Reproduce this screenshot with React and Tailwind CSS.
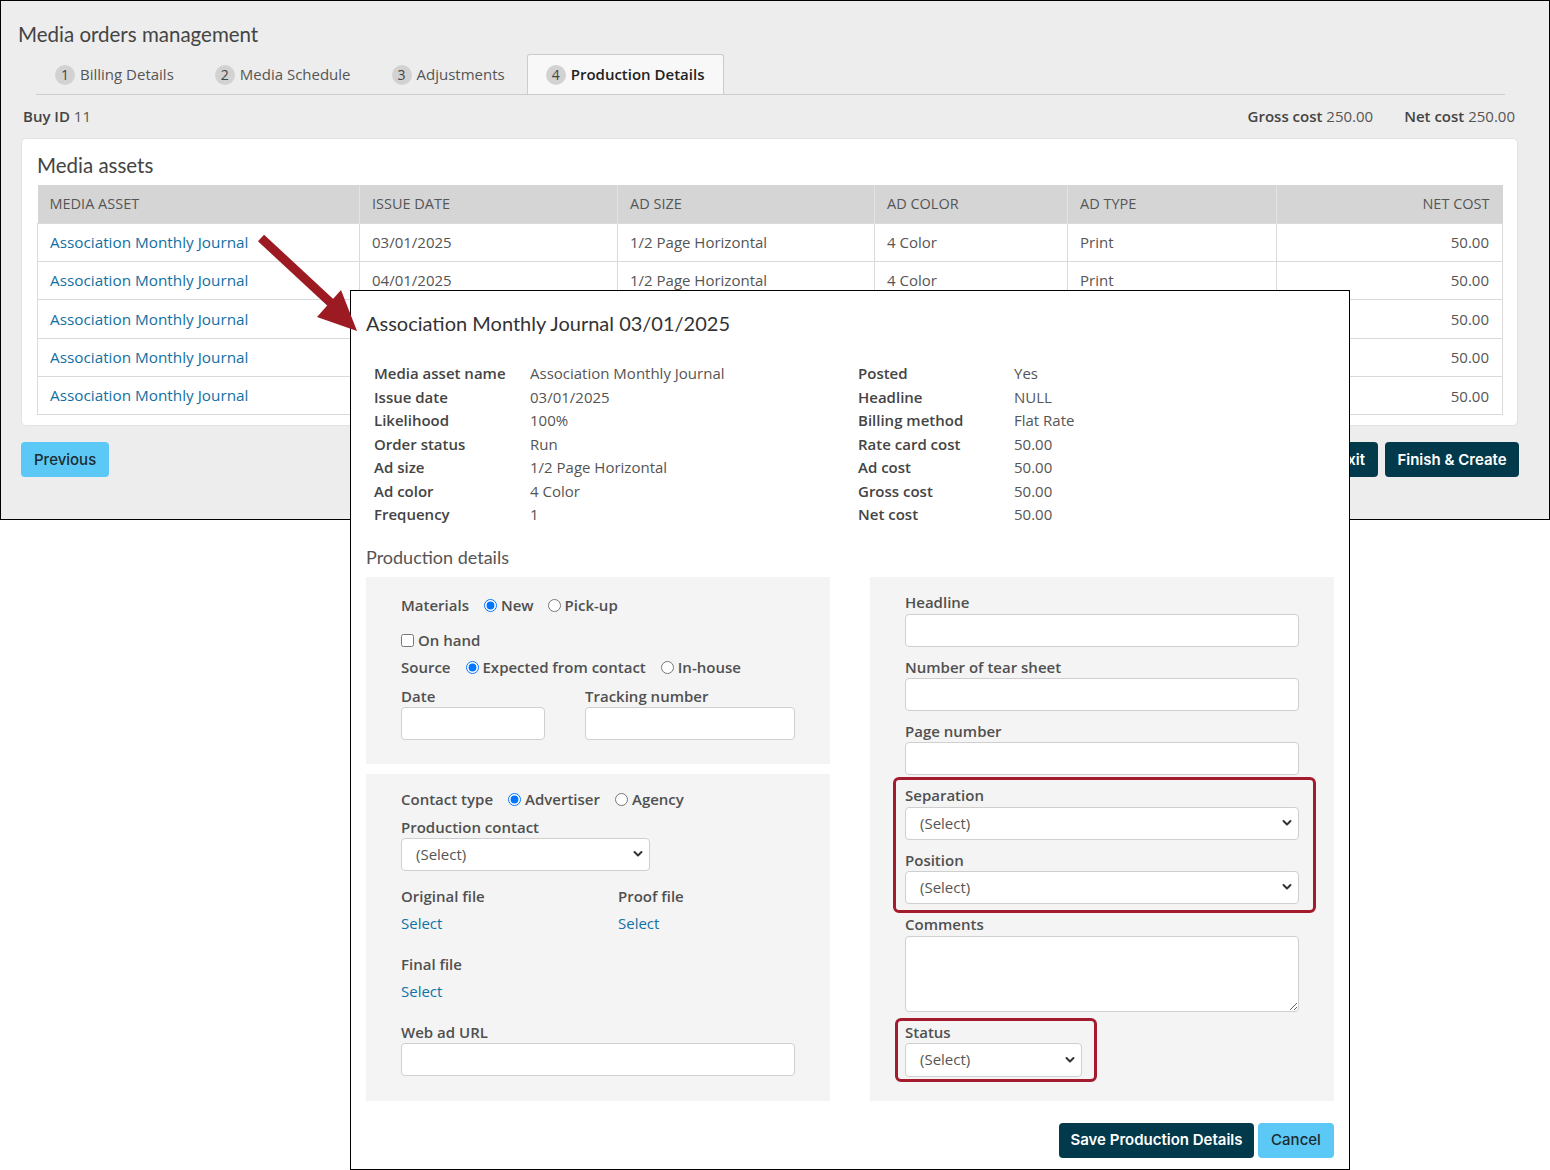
import React from 'react';

const Chevron = () => (
  <svg className="absolute right-[6px] top-1/2 -translate-y-1/2" width="10" height="7" viewBox="0 0 10 7">
    <path d="M1.5 1.5 L5 5 L8.5 1.5" fill="none" stroke="#333" strokeWidth="2" strokeLinecap="round" strokeLinejoin="round" />
  </svg>
);

const FakeSelect = ({ w, h = 33 }) => (
  <div
    className="relative bg-white border border-[#cfcfcf] rounded-[4px] flex items-center pl-[14px] text-[15px] text-[#555]"
    style={{ width: w, height: h }}
  >
    (Select)
    <Chevron />
  </div>
);

const Input = ({ w }) => (
  <div className="h-[33px] bg-white border border-[#cfcfcf] rounded-[4px]" style={{ width: w }} />
);

const Label = ({ children, className = '' }) => (
  <div className={`h-[22px] leading-[22px] text-[15px] font-semibold text-[#505050] ${className}`}>{children}</div>
);

const Radio = ({ checked, label }) => (
  <label className="flex items-center">
    <input type="radio" defaultChecked={checked} className="m-0 w-[13px] h-[13px]" />
    <span className="ml-[4px] text-[15px] font-semibold text-[#505050]">{label}</span>
  </label>
);

const Tab = ({ n, label, active }) => (
  <div
    className={
      active
        ? 'flex items-center px-[18px] h-[40px] bg-[#f8f8f8] border border-[#cccccc] border-b-0 rounded-t-[3px]'
        : 'flex items-center px-[19px] h-[39px]'
    }
  >
    <span className="w-[20px] h-[20px] rounded-full bg-[#d2d2d2] text-[14px] text-[#444] flex items-center justify-center">
      {n}
    </span>
    <span className={active ? 'ml-[5px] text-[15px] font-semibold text-[#222]' : 'ml-[5px] text-[15px] text-[#555]'}>
      {label}
    </span>
  </div>
);

export default function App() {
  const dates = ['03/01/2025', '04/01/2025', '05/01/2025', '06/01/2025', '07/01/2025'];
  const cols = ['MEDIA ASSET', 'ISSUE DATE', 'AD SIZE', 'AD COLOR', 'AD TYPE'];
  const widths = [322, 258, 257, 193, 209, 226];
  const leftDetails = [
    ['Media asset name', 'Association Monthly Journal'],
    ['Issue date', '03/01/2025'],
    ['Likelihood', '100%'],
    ['Order status', 'Run'],
    ['Ad size', '1/2 Page Horizontal'],
    ['Ad color', '4 Color'],
    ['Frequency', '1'],
  ];
  const rightDetails = [
    ['Posted', 'Yes'],
    ['Headline', 'NULL'],
    ['Billing method', 'Flat Rate'],
    ['Rate card cost', '50.00'],
    ['Ad cost', '50.00'],
    ['Gross cost', '50.00'],
    ['Net cost', '50.00'],
  ];

  return (
    <div className="relative w-[1550px] h-[1170px] bg-white overflow-hidden font-['Open_Sans',sans-serif]">
      {/* Background page */}
      <div className="h-[520px] border border-black bg-[#ededed]">
        <div className="pl-[17px] pt-[19px] text-[20.5px] leading-[28px] text-[#444] font-['Lato',sans-serif]">
          Media orders management
        </div>
        <div className="ml-[35px] mr-[44px] mt-[7px] h-[40px] flex items-end gap-[3px] border-b border-[#cccccc]">
          <Tab n="1" label="Billing Details" />
          <Tab n="2" label="Media Schedule" />
          <Tab n="3" label="Adjustments" />
          <Tab n="4" label="Production Details" active />
        </div>
        <div className="flex justify-between pl-[22px] pr-[34px] mt-[10px] text-[15px] leading-[22px] text-[#555]">
          <div>
            <span className="font-semibold text-[#444]">Buy ID</span> 11
          </div>
          <div className="flex gap-[31px]">
            <span>
              <span className="font-semibold text-[#444]">Gross cost</span> 250.00
            </span>
            <span>
              <span className="font-semibold text-[#444]">Net cost</span> 250.00
            </span>
          </div>
        </div>

        <div className="ml-[20px] w-[1497px] mt-[11px] bg-white rounded-[5px] border border-[#e2e2e2] pl-[15px] pt-[9px] pb-[10px]">
          <div className="h-[37px] leading-[35px] text-[20.5px] text-[#444] font-['Lato',sans-serif]">Media assets</div>
          <table className="table-fixed border-collapse w-[1465px] text-[15px]">
            <colgroup>
              {widths.map((w, i) => (
                <col key={i} style={{ width: w }} />
              ))}
            </colgroup>
            <thead>
              <tr className="h-[38px] bg-[#d5d5d5]">
                {cols.map((c) => (
                  <th key={c} className="text-left font-normal text-[14.5px] text-[#555] pl-[12px] border-r border-[#e3e3e3]">
                    {c}
                  </th>
                ))}
                <th className="text-right font-normal text-[14.5px] text-[#555] pr-[13px]">NET COST</th>
              </tr>
            </thead>
            <tbody>
              {dates.map((d, i) => (
                <tr key={i} className="h-[38.4px] border border-[#dadada]">
                  <td className="pl-[12px] text-[15.3px] text-[#1270a3] border-r border-[#dadada]">Association Monthly Journal</td>
                  <td className="pl-[12px] text-[#555] border-r border-[#dadada]">{d}</td>
                  <td className="pl-[12px] text-[#555] border-r border-[#dadada]">1/2 Page Horizontal</td>
                  <td className="pl-[12px] text-[#555] border-r border-[#dadada]">4 Color</td>
                  <td className="pl-[12px] text-[#555] border-r border-[#dadada]">Print</td>
                  <td className="pr-[13px] text-right text-[#555]">50.00</td>
                </tr>
              ))}
            </tbody>
          </table>
        </div>

        <div className="ml-[20px] w-[1498px] mt-[16px] flex justify-between font-['Inter',sans-serif]">
          <button className="h-[35px] px-[13px] rounded-[4px] bg-[#5bc8f5] text-[15px] font-medium text-[#1d2a30]">
            Previous
          </button>
          <div className="flex gap-[7px]">
            <button className="h-[35px] px-[13px] rounded-[4px] bg-[#023a4c] text-[15px] font-semibold text-white">
              Save &amp; Exit
            </button>
            <button className="h-[35px] w-[134px] rounded-[4px] bg-[#023a4c] text-[15px] font-semibold text-white">
              Finish &amp; Create
            </button>
          </div>
        </div>
      </div>

      {/* Dialog */}
      <div className="absolute left-[350px] top-[290px] w-[1000px] h-[880px] border border-black bg-white px-[15px] pt-[18px]">
        <div className="text-[20px] leading-[28px] text-[#333] font-['Lato',sans-serif]">
          Association Monthly Journal 03/01/2025
        </div>
        <div className="mt-[25px] ml-[8px] grid grid-cols-[156px_328px_156px_1fr] text-[15px] leading-[23.5px]">
          {leftDetails.map((l, i) => (
            <React.Fragment key={i}>
              <div className="font-semibold text-[#444]">{l[0]}</div>
              <div className="text-[#555]">{l[1]}</div>
              <div className="font-semibold text-[#444]">{rightDetails[i][0]}</div>
              <div className="text-[#555]">{rightDetails[i][1]}</div>
            </React.Fragment>
          ))}
        </div>
        <div className="mt-[19px] text-[18px] leading-[22px] text-[#555] font-['Lato',sans-serif]">Production details</div>

        <div className="mt-[9px] flex gap-[40px]">
          <div className="w-[464px] flex flex-col gap-[10px]">
            <div className="h-[187px] bg-[#f4f4f4] pl-[35px] pt-[17px]">
              <div className="h-[24px] flex items-center">
                <span className="text-[15px] font-semibold text-[#505050] mr-[15px]">Materials</span>
                <Radio checked label="New" />
                <span className="w-[14px]" />
                <Radio label="Pick-up" />
              </div>
              <label className="mt-[11px] h-[24px] flex items-center">
                <input type="checkbox" className="m-0 w-[13px] h-[13px]" />
                <span className="ml-[4px] text-[15px] font-semibold text-[#505050]">On hand</span>
              </label>
              <div className="mt-[3px] h-[24px] flex items-center">
                <span className="text-[15px] font-semibold text-[#505050] mr-[15px]">Source</span>
                <Radio checked label="Expected from contact" />
                <span className="w-[15px]" />
                <Radio label="In-house" />
              </div>
              <div className="mt-[5px] flex gap-[40px]">
                <div>
                  <Label>Date</Label>
                  <Input w={144} />
                </div>
                <div>
                  <Label>Tracking number</Label>
                  <Input w={210} />
                </div>
              </div>
            </div>

            <div className="h-[327px] bg-[#f4f4f4] pl-[35px] pt-[14px]">
              <div className="h-[24px] flex items-center">
                <span className="text-[15px] font-semibold text-[#505050] mr-[15px]">Contact type</span>
                <Radio checked label="Advertiser" />
                <span className="w-[15px]" />
                <Radio label="Agency" />
              </div>
              <Label className="mt-[4px]">Production contact</Label>
              <FakeSelect w={249} />
              <div className="mt-[14px] flex">
                <div className="w-[217px]">
                  <Label>Original file</Label>
                  <div className="mt-[5px] h-[22px] leading-[22px] text-[15px] text-[#0f72a6]">Select</div>
                </div>
                <div>
                  <Label>Proof file</Label>
                  <div className="mt-[5px] h-[22px] leading-[22px] text-[15px] text-[#0f72a6]">Select</div>
                </div>
              </div>
              <Label className="mt-[19px]">Final file</Label>
              <div className="mt-[5px] h-[22px] leading-[22px] text-[15px] text-[#0f72a6]">Select</div>
              <Label className="mt-[19px]">Web ad URL</Label>
              <Input w={394} />
            </div>
          </div>

          <div className="w-[464px] h-[524px] bg-[#f4f4f4] pl-[35px] pt-[14px]">
            <Label>Headline</Label>
            <div className="mt-[1px]">
              <Input w={394} />
            </div>
            <Label className="mt-[9px]">Number of tear sheet</Label>
            <Input w={394} />
            <Label className="mt-[9px]">Page number</Label>
            <Input w={394} />
            <div className="mt-[2px] -ml-[12px] w-[423px] border-[3px] border-[#a31b2c] rounded-[6px] pl-[9px] pt-[4px] pb-[6px]">
              <Label>Separation</Label>
              <div className="mt-[1px]">
                <FakeSelect w={394} />
              </div>
              <Label className="mt-[9px]">Position</Label>
              <FakeSelect w={394} />
            </div>
            <Label>Comments</Label>
            <textarea className="mt-[1px] block w-[394px] h-[76px] bg-white border border-[#cfcfcf] rounded-[4px]" />
            <div className="mt-[6px] -ml-[10px] w-[202px] border-[3px] border-[#a31b2c] rounded-[6px] pl-[7px] pb-[2px]">
              <Label>Status</Label>
              <FakeSelect w={177} h={34} />
            </div>
          </div>
        </div>

        <div className="mt-[22px] flex justify-end gap-[4px] font-['Inter',sans-serif]">
          <button className="h-[35px] w-[195px] rounded-[4px] bg-[#023a4c] text-[15px] font-semibold text-white">
            Save Production Details
          </button>
          <button className="h-[35px] w-[76px] rounded-[4px] bg-[#5bc8f5] text-[15px] font-medium text-[#1d2a30]">
            Cancel
          </button>
        </div>
      </div>

      {/* Arrow annotation */}
      <svg className="absolute left-0 top-0 pointer-events-none" width="1550" height="1170">
        <line x1="261" y1="238" x2="331" y2="303" stroke="#9c1b23" strokeWidth="9" />
        <polygon points="357,331 341,290 317,317" fill="#9c1b23" />
      </svg>
    </div>
  );
}
